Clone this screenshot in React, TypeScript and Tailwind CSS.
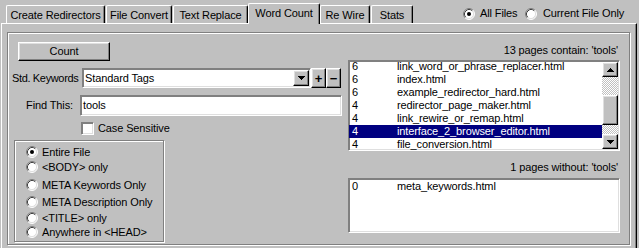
import React from "react";

const raised =
  "border border-t-white border-l-white border-r-black border-b-black shadow-[inset_-1px_-1px_0_#808080,inset_1px_1px_0_#dfdfdf] bg-[#c0c0c0]";
const sunken =
  "border border-t-[#808080] border-l-[#808080] border-r-white border-b-white shadow-[inset_1px_1px_0_#808080,inset_-1px_-1px_0_#dfdfdf] bg-white";

const tabs = [
  { label: "Create Redirectors", cls: "w-[99px]" },
  { label: "File Convert", cls: "ml-[1px] w-[66px]" },
  { label: "Text Replace", cls: "ml-[1px] w-[75px]" },
  { label: "Word Count", cls: "w-[72px]", active: true },
  { label: "Re Wire", cls: "w-[50px]" },
  { label: "Stats", cls: "ml-[1px] w-[42px]" },
];

const hits = [
  ["6", "link_word_or_phrase_replacer.html"],
  ["6", "index.html"],
  ["6", "example_redirector_hard.html"],
  ["4", "redirector_page_maker.html"],
  ["4", "link_rewire_or_remap.html"],
  ["4", "interface_2_browser_editor.html"],
  ["4", "file_conversion.html"],
];

const scopes = [
  { label: "Entire File", cls: "mt-[4px]", checked: true },
  { label: "<BODY> only", cls: "mt-[1px]" },
  { label: "META Keywords Only", cls: "mt-[4px]" },
  { label: "META Description Only", cls: "mt-[3px]" },
  { label: "<TITLE> only", cls: "mt-[2px]" },
  { label: "Anywhere in <HEAD>", cls: "mt-0" },
];

function Radio({ checked = false }: { checked?: boolean }) {
  return (
    <svg width="12" height="12" viewBox="0 0 12 12" className="shrink-0">
      <circle cx="6" cy="6" r="5" fill="#fff" />
      <path d="M2.11 9.89A5.5 5.5 0 0 1 9.89 2.11" fill="none" stroke="#808080" />
      <path d="M9.89 2.11A5.5 5.5 0 0 1 2.11 9.89" fill="none" stroke="#fff" />
      <path d="M2.82 9.18A4.5 4.5 0 0 1 9.18 2.82" fill="none" stroke="#404040" />
      <path d="M9.18 2.82A4.5 4.5 0 0 1 2.82 9.18" fill="none" stroke="#dfdfdf" />
      {checked && <circle cx="6" cy="6" r="2" fill="#000" />}
    </svg>
  );
}

function Arrow({ up = false }: { up?: boolean }) {
  return (
    <svg width="7" height="4" viewBox="0 0 7 4" shapeRendering="crispEdges">
      <path d={up ? "M0 4H7L3.5 0Z" : "M0 0H7L3.5 4Z"} fill="#000" />
    </svg>
  );
}

export default function App() {
  return (
    <div className="h-[248px] w-[639px] overflow-hidden bg-[#c0c0c0] font-['Liberation_Sans',Arial,sans-serif] text-[11px] leading-[13px] tracking-[-0.12px] whitespace-nowrap text-black">
      {/* Tab strip + file scope */}
      <div className="flex h-[23px] items-end pl-[6px]">
        {tabs.map((t) =>
          t.active ? (
            <div
              key={t.label}
              className={`relative z-10 -mb-px flex h-[21px] items-start justify-center rounded-t-[2px] border-t border-r border-l border-t-white border-r-black border-l-white bg-[#c0c0c0] pt-[2px] leading-[14px] shadow-[inset_-1px_0_0_#808080] ${t.cls}`}
            >
              {t.label}
            </div>
          ) : (
            <div
              key={t.label}
              className={`flex h-[18px] items-center justify-center rounded-t-[2px] border-t border-r border-l border-t-white border-r-black border-l-white pt-[1px] shadow-[inset_-1px_0_0_#808080] ${t.cls}`}
            >
              {t.label}
            </div>
          )
        )}
        <div className="mt-[7px] ml-[50px] flex items-center self-start">
          <Radio checked />
          <span className="ml-[5px] w-[45px]">All Files</span>
          <Radio />
          <span className="ml-[6px]">Current File Only</span>
        </div>
      </div>

      {/* Tab body */}
      <div className="ml-[1px] h-[225px] w-[636px] border-t border-r border-l border-t-white border-r-black border-l-white pt-[8px] pl-[5px] shadow-[inset_-1px_0_0_#808080]">
        <div className="flex h-[213px] w-[623px] border border-[#808080] shadow-[inset_1px_1px_0_#fff,1px_1px_0_#fff]">
          {/* Left column */}
          <div className="flex w-[340px] flex-col">
            <button className={`mt-[9px] ml-[10px] flex h-[19px] w-[92px] items-center justify-center ${raised}`}>
              Count
            </button>

            <div className="mt-[7px] flex h-[20px] items-center pl-[4px]">
              <span className="w-[70px] tracking-[-0.35px]">Std. Keywords</span>
              <div className={`flex h-[20px] w-[229px] items-center justify-between pl-[2px] ${sunken}`}>
                <span>Standard Tags</span>
                <div className={`mr-px flex h-[16px] w-[16px] items-center justify-center ${raised}`}>
                  <Arrow />
                </div>
              </div>
              <div className={`flex h-[20px] w-[15px] items-center justify-center text-[13px] font-bold ${raised}`}>+</div>
              <div className={`flex h-[20px] w-[15px] items-center justify-center text-[13px] font-bold ${raised}`}>−</div>
            </div>

            <div className="mt-[7px] flex h-[21px] items-center">
              <span className="w-[72px] pr-[7px] text-right">Find This:</span>
              <div className={`flex h-[21px] w-[262px] items-center pl-[2px] ${sunken}`}>tools</div>
            </div>

            <div className="mt-[6px] ml-[73px] flex h-[13px] items-center">
              <div className={`h-[13px] w-[13px] ${sunken}`} />
              <span className="ml-[4px]">Case Sensitive</span>
            </div>

            {/* Search scope */}
            <div className="mt-[5px] ml-[6px] flex h-[102px] w-[150px] flex-col border border-[#808080] pl-[11px] shadow-[inset_1px_1px_0_#fff,1px_1px_0_#fff]">
              {scopes.map((s) => (
                <div key={s.label} className={`flex h-[14px] items-center ${s.cls}`}>
                  <Radio checked={s.checked} />
                  <span className="ml-[4px]">{s.label}</span>
                </div>
              ))}
            </div>
          </div>

          {/* Right column */}
          <div className="flex w-[272px] flex-col">
            <div className="mt-[10px] h-[14px] pr-[2px] text-right leading-[14px]">13 pages contain: 'tools'</div>
            <div className={`mt-[3px] flex h-[91px] ${sunken}`}>
              <div className="flex-1 overflow-hidden">
                <div className="-mt-px">
                  {hits.map(([n, f], i) => (
                    <div
                      key={f}
                      className={`flex h-[13px] items-center ${i === 5 ? "bg-[#000080] text-white" : ""}`}
                    >
                      <span className="w-[48px] pl-[3px]">{n}</span>
                      <span>{f}</span>
                    </div>
                  ))}
                </div>
              </div>
              <div className="my-px mr-px flex w-[16px] flex-col">
                <div className={`flex h-[15px] items-center justify-center ${raised}`}>
                  <Arrow up />
                </div>
                <div className="flex flex-1 flex-col bg-[length:2px_2px] bg-[image:repeating-conic-gradient(#fff_0%_25%,#c0c0c0_0%_50%)]">
                  <div className={`mt-[18px] h-[30px] ${raised}`} />
                </div>
                <div className={`flex h-[15px] items-center justify-center ${raised}`}>
                  <Arrow />
                </div>
              </div>
            </div>

            <div className="mt-[9px] h-[14px] pr-[2px] text-right leading-[14px]">1 pages without: 'tools'</div>
            <div className={`mt-[4px] h-[55px] pt-[1px] ${sunken}`}>
              <div className="flex h-[13px] items-center">
                <span className="w-[48px] pl-[3px]">0</span>
                <span>meta_keywords.html</span>
              </div>
            </div>
          </div>
        </div>
      </div>
    </div>
  );
}
